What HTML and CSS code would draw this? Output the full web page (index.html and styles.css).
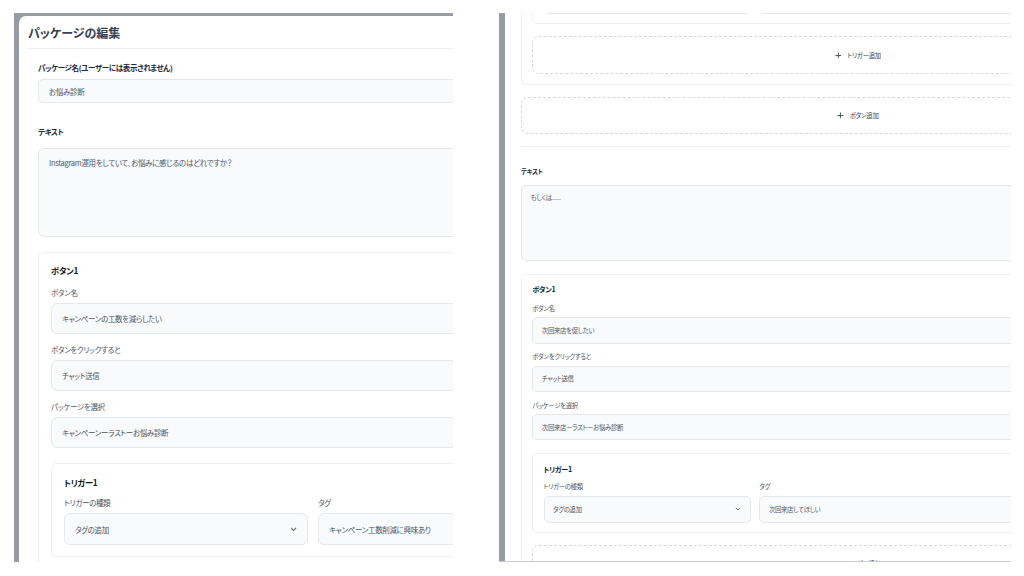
FILE: index.html
```html
<!DOCTYPE html>
<html lang="ja">

<head>
  <meta charset="UTF-8">
  <meta name="viewport" content="width=device-width, initial-scale=1.0">
  <title>パッケージの編集</title>
  <link rel="stylesheet" href="styles.css">
</head>

<body>
  <div class="shots">
    <!-- 左: モーダルの先頭 -->
    <section class="shot shot-left">
      <div class="modal">
        <header class="modal-head">
          <h2>パッケージの編集</h2>
        </header>
        <div class="modal-body">
          <div class="section">
            <div class="field-label">パッケージ名(ユーザーには表示されません)</div>
            <div class="input input-sm">お悩み診断</div>

            <div class="field-label label-text">テキスト</div>
            <div class="textarea">Instagram運用をしていて、お悩みに感じるのはどれですか？</div>

            <div class="card">
              <div class="card-title">ボタン1</div>
              <div class="sub-field">
                <div class="sub-label">ボタン名</div>
                <div class="input">キャンペーンの工数を減らしたい</div>
              </div>
              <div class="sub-field">
                <div class="sub-label">ボタンをクリックすると</div>
                <div class="input">チャット送信</div>
              </div>
              <div class="sub-field">
                <div class="sub-label">パッケージを選択</div>
                <div class="input">キャンペーンーラストーお悩み診断</div>
              </div>

              <div class="trigger">
                <div class="card-title">トリガー1</div>
                <div class="trigger-fields">
                  <div>
                    <div class="sub-label">トリガーの種類</div>
                    <div class="input select">
                      <span>タグの追加</span>
                      <svg class="chevron" width="7" height="5" viewBox="0 0 7 5"><polyline points="1,1 3.5,3.5 6,1" /></svg>
                    </div>
                  </div>
                  <div>
                    <div class="sub-label">タグ</div>
                    <div class="input">キャンペーン工数削減に興味あり</div>
                  </div>
                </div>
              </div>
            </div>
          </div>
        </div>
      </div>
    </section>

    <!-- 右: スクロールした状態 -->
    <section class="shot shot-right">
      <div class="modal">
        <div class="modal-body">
          <div class="section">
            <div class="card card-tail">
              <div class="trigger">
                <div class="trigger-fields">
                  <div class="input select"></div>
                  <div class="input"></div>
                </div>
              </div>
              <div class="add">
                <svg class="plus" width="8" height="8" viewBox="0 0 8 8"><path d="M4 0.5v7M0.5 4h7" /></svg>
                <span>トリガー追加</span>
              </div>
            </div>
            <div class="add">
              <svg class="plus" width="8" height="8" viewBox="0 0 8 8"><path d="M4 0.5v7M0.5 4h7" /></svg>
              <span>ボタン追加</span>
            </div>
          </div>

          <div class="section">
            <div class="field-label label-text">テキスト</div>
            <div class="textarea">もしくは......</div>

            <div class="card">
              <div class="card-title">ボタン1</div>
              <div class="sub-field">
                <div class="sub-label">ボタン名</div>
                <div class="input">次回来店を促したい</div>
              </div>
              <div class="sub-field">
                <div class="sub-label">ボタンをクリックすると</div>
                <div class="input">チャット送信</div>
              </div>
              <div class="sub-field">
                <div class="sub-label">パッケージを選択</div>
                <div class="input">次回来店ーラストーお悩み診断</div>
              </div>

              <div class="trigger">
                <div class="card-title">トリガー1</div>
                <div class="trigger-fields">
                  <div>
                    <div class="sub-label">トリガーの種類</div>
                    <div class="input select">
                      <span>タグの追加</span>
                      <svg class="chevron" width="7" height="5" viewBox="0 0 7 5"><polyline points="1,1 3.5,3.5 6,1" /></svg>
                    </div>
                  </div>
                  <div>
                    <div class="sub-label">タグ</div>
                    <div class="input">次回来店してほしい</div>
                  </div>
                </div>
              </div>
              <div class="add">
                <svg class="plus" width="8" height="8" viewBox="0 0 8 8"><path d="M4 0.5v7M0.5 4h7" /></svg>
                <span>トリガー追加</span>
              </div>
            </div>
          </div>
        </div>
      </div>
    </section>
  </div>
</body>

</html>
```

FILE: styles.css
```css
:root {
  --backdrop: #979ba3;
  --text-dark: #1f2937;
  --text: #374151;
  --text-muted: #4b5563;
  --input-bg: #f9fafb;
  --input-border: #e5e7eb;
  --card-border: #eceef1;
  --dashed: #d4d7dc;
}

body {
  margin: 0;
  background: #fff;
  font-family: "Noto Sans CJK JP", "Noto Sans", sans-serif;
  font-feature-settings: "palt";
  color: var(--text);
}

.shots {
  display: flex;
  gap: 46px;
  padding: 13px 0 0 14px;
}

.shot {
  height: 549px;
  box-sizing: border-box;
  overflow: hidden;
  background: var(--backdrop);
}

.shot-left {
  width: 439px;
  padding: 3px 0 0 5px;
}

.shot-right {
  width: 512px;
  padding-left: 6px;
  border-bottom: 1px solid #c9ccd1;
}

.modal {
  width: 830px;
  min-height: 100%;
  background: #fff;
  border-top-left-radius: 7px;
}

.shot-right .modal {
  zoom: 0.85;
  border-radius: 0;
}

.modal-head {
  margin-left: 9px;
  height: 32px;
  display: flex;
  align-items: center;
  border-bottom: 1px solid var(--card-border);
}

.modal-head h2 {
  margin: 0;
  font-size: 12px;
  font-weight: 700;
  color: var(--text);
}

.modal-body {
  padding: 13px 19px 0;
}

.shot-right .modal-body {
  padding-top: 0;
}

.section + .section {
  margin-top: 14px;
  border-top: 1px solid var(--card-border);
}

.field-label {
  font-size: 7.5px;
  font-weight: 600;
  line-height: 12px;
  letter-spacing: -0.35px;
  color: var(--text-dark);
  margin-bottom: 5px;
}

.label-text {
  margin-top: 23px;
  margin-bottom: 10px;
}

.input {
  height: 31px;
  box-sizing: border-box;
  display: flex;
  align-items: center;
  justify-content: space-between;
  padding: 0 10px;
  background: var(--input-bg);
  border: 1px solid var(--input-border);
  border-radius: 6px;
  font-size: 7.5px;
  letter-spacing: -0.35px;
  color: var(--text-muted);
}

.input-sm {
  height: 24px;
  border-radius: 5px;
}

.textarea {
  height: 89px;
  box-sizing: border-box;
  padding: 8px 10px;
  background: var(--input-bg);
  border: 1px solid var(--input-border);
  border-radius: 6px;
  font-size: 7.5px;
  line-height: 12px;
  letter-spacing: -0.3px;
  color: var(--text-muted);
  margin-bottom: 15px;
}

.card {
  border: 1px solid var(--card-border);
  border-radius: 6px;
  padding: 11px 12px 12px;
}

.card-title {
  font-size: 8.3px;
  font-weight: 700;
  line-height: 12px;
  letter-spacing: -0.3px;
  color: #111827;
  margin-bottom: 11px;
}

.sub-field + .sub-field {
  margin-top: 10px;
}

.sub-label {
  font-size: 7.5px;
  line-height: 12px;
  letter-spacing: -0.35px;
  color: var(--text-muted);
  margin-bottom: 4px;
}

.trigger {
  margin-top: 15px;
  border: 1px solid var(--card-border);
  border-radius: 6px;
  padding: 12px 12px 11px;
}

.trigger .card-title {
  margin-bottom: 9px;
}

.trigger .input {
  height: 32px;
}

.trigger-fields {
  display: grid;
  grid-template-columns: 244px 1fr;
  gap: 10px;
}

.chevron {
  fill: none;
  stroke: #6b7280;
  stroke-width: 1.1;
}

/* 上に切れているボタンカードの末尾 */
.card-tail {
  margin-top: -56px;
}

.card-tail .trigger {
  margin-top: 0;
}

.add {
  margin-top: 14px;
  height: 44px;
  box-sizing: border-box;
  display: flex;
  align-items: center;
  justify-content: center;
  gap: 7px;
  border: 1px dashed var(--dashed);
  border-radius: 8px;
  font-size: 7.5px;
  letter-spacing: -0.3px;
  color: var(--text);
}

.plus {
  fill: none;
  stroke: var(--text-muted);
  stroke-width: 1.2;
}
```
